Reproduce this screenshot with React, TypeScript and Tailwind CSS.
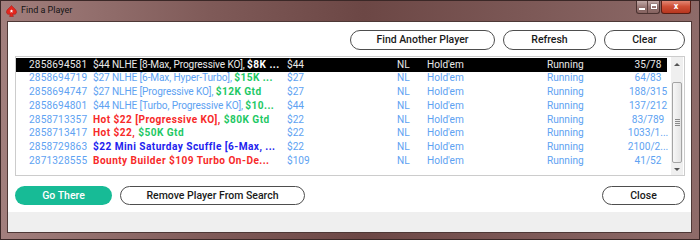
import React from "react";

type Seg = { t: string; c?: string; b?: boolean };
type Row = { id: string; name: Seg[]; buy: string; players: string; sel?: boolean };

const BLUE = "text-[#5ea2f2]";
const GREEN = "text-[#1ec865]";
const RED = "text-[#f72a2a]";
const DBLUE = "text-[#2222ee]";

const rows: Row[] = [
  { id: "2858694581", name: [{ t: "$44 NLHE [8-Max, Progressive KO], " }, { t: "$8K ...", b: true }], buy: "$44", players: "35/78", sel: true },
  { id: "2858694719", name: [{ t: "$27 NLHE [6-Max, Hyper-Turbo], " }, { t: "$15K ...", c: GREEN, b: true }], buy: "$27", players: "64/83" },
  { id: "2858694747", name: [{ t: "$27 NLHE [Progressive KO], " }, { t: "$12K Gtd", c: GREEN, b: true }], buy: "$27", players: "188/315" },
  { id: "2858694801", name: [{ t: "$44 NLHE [Turbo, Progressive KO], " }, { t: "$10...", c: GREEN, b: true }], buy: "$44", players: "137/212" },
  { id: "2858713357", name: [{ t: "Hot $22 [Progressive KO], ", c: RED, b: true }, { t: "$80K Gtd", c: GREEN, b: true }], buy: "$22", players: "83/789" },
  { id: "2858713417", name: [{ t: "Hot $22, ", c: RED, b: true }, { t: "$50K Gtd", c: GREEN, b: true }], buy: "$22", players: "1033/1..." },
  { id: "2858729863", name: [{ t: "$22 Mini Saturday Scuffle [6-Max, ...", c: DBLUE, b: true }], buy: "$22", players: "2100/2..." },
  { id: "2871328555", name: [{ t: "Bounty Builder $109 Turbo On-De...", c: RED, b: true }], buy: "$109", players: "41/52" },
];

function Btn({ w, children, primary }: { w: string; children: React.ReactNode; primary?: boolean }) {
  return primary ? (
    <div className={`${w} h-full rounded-full bg-[#17bb96] text-white flex items-center justify-center text-[10.5px] font-medium`}>
      {children}
    </div>
  ) : (
    <div className={`${w} h-full rounded-full bg-white border border-[#4e4e4e] text-[#1a1a1a] flex items-center justify-center text-[10.5px] font-medium`}>
      {children}
    </div>
  );
}

export default function App() {
  return (
    <div
      className="w-[700px] h-[240px] overflow-hidden border border-[#3b2827] flex flex-col bg-[linear-gradient(90deg,#a27f7d_0%,#7f5a58_30%,#6c4745_52%,#7c5856_75%,#8e6b69_100%)]"
      style={{ fontFamily: "Roboto, 'Liberation Sans', sans-serif" }}
    >
      {/* title bar */}
      <div className="h-[20px] flex items-start shrink-0">
        <div className="flex items-center h-[19px] pl-[5px] gap-[4px]">
          <svg width="11" height="12" viewBox="0 0 11 12">
            <path d="M5.5 0.5 C3.5 3 0.5 4.5 0.5 7 C0.5 9 2.5 10 4.3 8.9 L3.6 11.5 H7.4 L6.7 8.9 C8.5 10 10.5 9 10.5 7 C10.5 4.5 7.5 3 5.5 0.5 Z" fill="#e5271f" stroke="#a51510" strokeWidth="0.5" />
            <path d="M5.5 4.3 L6 5.6 L7.3 5.6 L6.25 6.4 L6.65 7.7 L5.5 6.9 L4.35 7.7 L4.75 6.4 L3.7 5.6 L5 5.6 Z" fill="#ffffff" />
          </svg>
          <span className="text-[9px] text-[#141414] leading-none">Find a Player</span>
        </div>
        <div className="flex-1" />
        <div className="flex h-[14px] mr-[8px] -mt-px">
          <div className="flex h-full rounded-b-[3px] border border-[#4a3230] border-t-0 overflow-hidden bg-[linear-gradient(180deg,#c8b2b0_0%,#9b7a78_50%,#85625f_100%)]">
            <div className="w-[11px] h-full flex items-center justify-center border-r border-[#5a403e]">
              <div className="w-[6px] h-[2px] bg-white mt-[4px] shadow-[0_0_1px_#333]" />
            </div>
            <div className="w-[11px] h-full flex items-center justify-center">
              <div className="w-[6px] h-[5px] border border-white border-t-2 shadow-[0_0_1px_#333]" />
            </div>
          </div>
          <div className="w-[30px] h-full ml-px rounded-b-[3px] border border-[#5a1e14] border-t-0 bg-[linear-gradient(180deg,#e6917f_0%,#cf4f36_50%,#b8361f_100%)] flex items-center justify-center text-white text-[9px] font-bold leading-none">
            x
          </div>
        </div>
      </div>

      {/* client area */}
      <div className="flex-1 ml-[6px] mr-[7px] mb-[6px] border border-[#4e3836] bg-white flex flex-col">
        <div className="h-[20px] mt-[8px] pr-[6px] flex justify-end gap-[8px] shrink-0">
          <Btn w="w-[145px]">Find Another Player</Btn>
          <Btn w="w-[93px]">Refresh</Btn>
          <Btn w="w-[81px]">Clear</Btn>
        </div>

        {/* list */}
        <div className="ml-[7px] mt-[6px] w-[670px] h-[120px] border border-[#cccccc] flex shrink-0">
          <div className="w-[651px] pt-px text-[10.1px]">
            {rows.map((r) => {
              const base = r.sel ? "text-[#e8e8e8]" : BLUE;
              return (
                <div key={r.id} className={`h-[13.7px] flex items-center whitespace-nowrap leading-none ${r.sel ? "bg-black" : ""} ${base}`}>
                  <div className="w-[77px] pl-[13px] shrink-0 tracking-[0.15px]">{r.id}</div>
                  <div className="w-[194px] shrink-0">
                    {r.name.map((s, i) => (
                      <span key={i} className={`${r.sel ? (s.b ? "text-white" : "") : s.c ?? ""} ${s.b ? "font-bold tracking-[0.45px]" : "tracking-[-0.12px]"}`}>
                        {s.t}
                      </span>
                    ))}
                  </div>
                  <div className="w-[110px] shrink-0">{r.buy}</div>
                  <div className="w-[30px] shrink-0">NL</div>
                  <div className="w-[120px] shrink-0">Hold'em</div>
                  <div className="w-[82px] shrink-0">Running</div>
                  <div className="w-[38px] shrink-0 flex justify-center">{r.players}</div>
                </div>
              );
            })}
          </div>
          <div className="flex-1" />
          <div className="w-[12px] mr-px flex flex-col bg-[#efefef]">
            <div className="h-[15px] flex items-center justify-center">
              <div className="w-0 h-0 border-l-[3px] border-r-[3px] border-b-[3px] border-l-transparent border-r-transparent border-b-[#555]" />
            </div>
            <div className="h-[10px]" />
            <div className="h-[81px] mx-px rounded-[2px] border border-[#a4a4a4] bg-[linear-gradient(90deg,#f7f7f7_0%,#e4e4e4_100%)] flex flex-col items-center justify-center gap-[1px]">
              <div className="w-[5px] h-px bg-[#8a8a8a]" />
              <div className="w-[5px] h-px bg-[#8a8a8a]" />
              <div className="w-[5px] h-px bg-[#8a8a8a]" />
              <div className="w-[5px] h-px bg-[#8a8a8a]" />
            </div>
            <div className="flex-1 flex items-center justify-center">
              <div className="w-0 h-0 border-l-[3px] border-r-[3px] border-t-[3px] border-l-transparent border-r-transparent border-t-[#555]" />
            </div>
          </div>
        </div>

        {/* bottom buttons */}
        <div className="h-[19px] mt-[10px] pl-[7px] pr-[6px] flex gap-[8px] shrink-0">
          <Btn w="w-[97px]" primary>Go There</Btn>
          <Btn w="w-[185px]">Remove Player From Search</Btn>
          <div className="flex-1" />
          <Btn w="w-[83px]">Close</Btn>
        </div>

        <div className="flex-1" />
        <div className="h-[20px] bg-[#efefef] shrink-0" />
      </div>
    </div>
  );
}
